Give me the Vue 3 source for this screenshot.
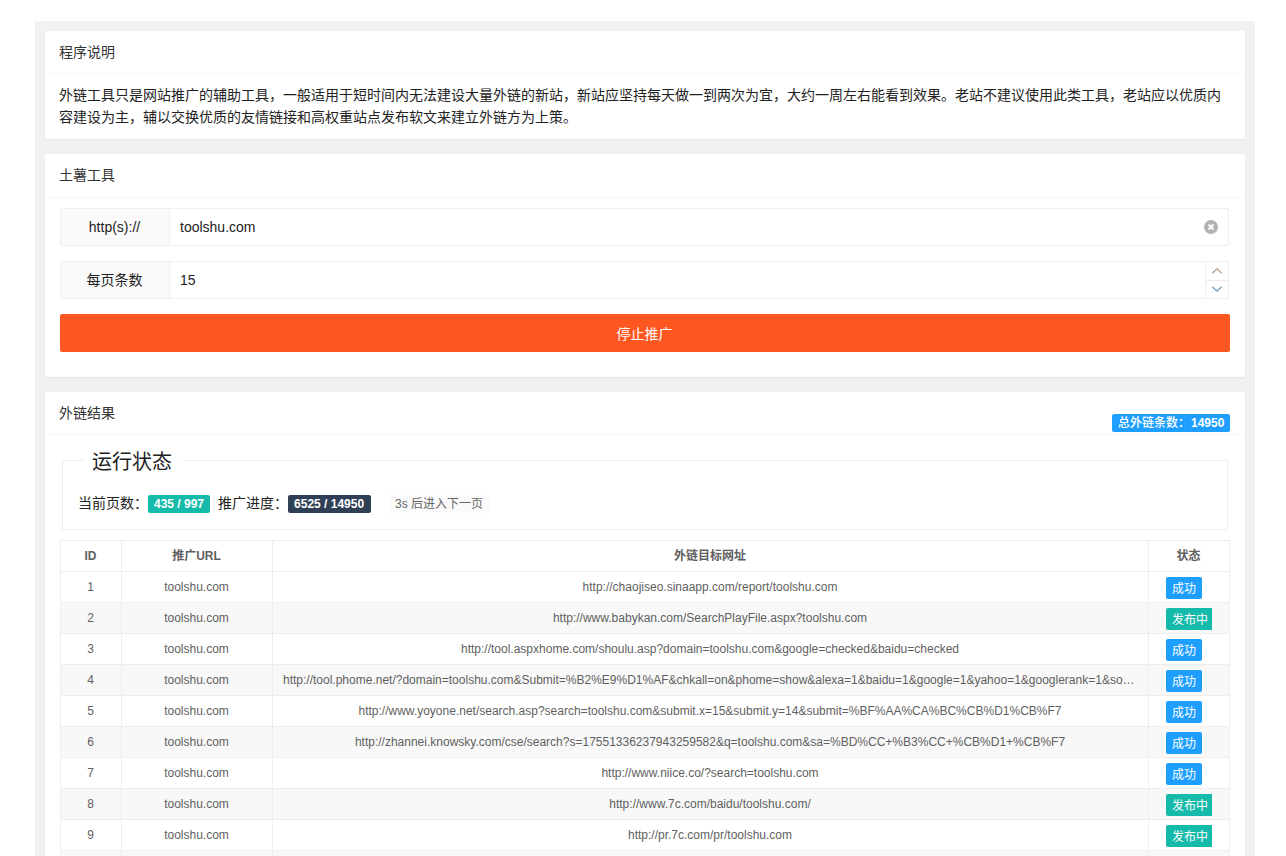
<script setup>
import { ref } from 'vue'

const domain = ref('toolshu.com')
const pageSize = ref(15)

const total = 14950
const links = [
  { url: 'http://chaojiseo.sinaapp.com/report/toolshu.com', done: true },
  { url: 'http://www.babykan.com/SearchPlayFile.aspx?toolshu.com', done: false },
  { url: 'http://tool.aspxhome.com/shoulu.asp?domain=toolshu.com&google=checked&baidu=checked', done: true },
  { url: 'http://tool.phome.net/?domain=toolshu.com&Submit=%B2%E9%D1%AF&chkall=on&phome=show&alexa=1&baidu=1&google=1&yahoo=1&googlerank=1&sogou=1', done: true },
  { url: 'http://www.yoyone.net/search.asp?search=toolshu.com&submit.x=15&submit.y=14&submit=%BF%AA%CA%BC%CB%D1%CB%F7', done: true },
  { url: 'http://zhannei.knowsky.com/cse/search?s=17551336237943259582&q=toolshu.com&sa=%BD%CC+%B3%CC+%CB%D1+%CB%F7', done: true },
  { url: 'http://www.niice.co/?search=toolshu.com', done: true },
  { url: 'http://www.7c.com/baidu/toolshu.com/', done: false },
  { url: 'http://pr.7c.com/pr/toolshu.com', done: false },
  { url: '', done: null },
]
</script>

<template>
  <div class="page">
    <section class="card">
      <div class="card-header">程序说明</div>
      <div class="card-body">
        外链工具只是网站推广的辅助工具，一般适用于短时间内无法建设大量外链的新站，新站应坚持每天做一到两次为宜，大约一周左右能看到效果。老站不建议使用此类工具，老站应以优质内容建设为主，辅以交换优质的友情链接和高权重站点发布软文来建立外链方为上策。
      </div>
    </section>

    <section class="card">
      <div class="card-header tall">土薯工具</div>
      <div class="card-body form">
        <div class="field">
          <label for="domain">http(s)://</label>
          <input id="domain" v-model="domain" type="text" />
          <button class="clear" aria-label="clear" @click="domain = ''">
            <svg width="14" height="14" viewBox="0 0 14 14">
              <circle cx="7" cy="7" r="7" fill="#b2b2b2" />
              <path d="M4.5 4.5l5 5M9.5 4.5l-5 5" stroke="#fff" stroke-width="1.8" />
            </svg>
          </button>
        </div>
        <div class="field">
          <label for="size">每页条数</label>
          <input id="size" v-model="pageSize" type="text" />
          <div class="stepper">
            <button aria-label="up" @click="pageSize++">
              <svg width="10" height="6" viewBox="0 0 10 6">
                <path d="M.4 5.2L5 .8l4.6 4.4" fill="none" stroke="#b39b84" stroke-width="1.2" />
              </svg>
            </button>
            <button aria-label="down" @click="pageSize--">
              <svg width="10" height="6" viewBox="0 0 10 6">
                <path d="M.4.8L5 5.2 9.6.8" fill="none" stroke="#6f9cc0" stroke-width="1.2" />
              </svg>
            </button>
          </div>
        </div>
        <button class="submit">停止推广</button>
      </div>
    </section>

    <section class="card">
      <div class="card-header">
        外链结果
        <span class="badge blue total">总外链条数：<b>{{ total }}</b></span>
      </div>
      <div class="card-body result">
        <fieldset>
          <legend>运行状态</legend>
          <div class="status">
            <span>当前页数：</span>
            <span class="badge green page-no">435 / 997</span>
            <span>推广进度：</span>
            <span class="badge dark">6525 / {{ total }}</span>
            <span class="badge gray">3s 后进入下一页</span>
          </div>
        </fieldset>

        <table>
          <colgroup>
            <col class="col-id" />
            <col class="col-url" />
            <col />
            <col class="col-state" />
          </colgroup>
          <thead>
            <tr>
              <th>ID</th>
              <th>推广URL</th>
              <th>外链目标网址</th>
              <th>状态</th>
            </tr>
          </thead>
          <tbody>
            <tr v-for="(link, i) in links" :key="i">
              <td>{{ link.url ? i + 1 : '' }}</td>
              <td>{{ link.url ? domain : '' }}</td>
              <td>{{ link.url }}</td>
              <td class="state">
                <span v-if="link.url" class="tag" :class="link.done ? 'blue' : 'green clipped'">{{ link.done ? '成功' : '发布中' }}</span>
              </td>
            </tr>
          </tbody>
        </table>
      </div>
    </section>
  </div>
</template>

<style>
body {
  height: 856px;
  overflow: hidden;
  background: #fff;
}
</style>

<style scoped>
* {
  box-sizing: border-box;
}

.page {
  width: 1220px;
  height: 835px;
  margin: 21px 0 0 35px;
  padding: 10px;
  background: #f1f1f1;
  overflow: hidden;
  color: #333;
  font-family: "Liberation Sans", "Noto Sans CJK SC", sans-serif;
  font-size: 14px;
  line-height: 22.4px;
}

.card {
  margin-bottom: 15px;
  border-radius: 2px;
  background: #fff;
  box-shadow: 0 1px 2px rgba(0, 0, 0, 0.05);
}

.card-header {
  display: flex;
  justify-content: space-between;
  height: 43px;
  padding: 0 15px 0 14px;
  border-bottom: 1px solid #f6f6f6;
  line-height: 42px;
}

.tall {
  height: 44px;
}

.card-body {
  padding: 10px 15px 10px 14px;
  color: #222;
}

.form {
  padding: 10.2px 15px 25px;
}

button {
  padding: 0;
  border: 0;
  background: none;
  font-family: inherit;
  cursor: pointer;
}

.field {
  display: flex;
  width: 1169px;
  height: 38px;
  margin-bottom: 15px;
  border: 1px solid #eee;
  border-radius: 2px;
}

.field label {
  width: 109px;
  padding-right: 1px;
  border-right: 1px solid #eee;
  background: #fafafa;
  line-height: 36px;
  text-align: center;
}

.field input {
  flex: 1;
  min-width: 0;
  padding: 0 10px;
  border: 0;
  outline: none;
  background: none;
  color: #222;
  font: inherit;
}

.clear {
  display: flex;
  align-items: center;
  padding-right: 10px;
}

.stepper {
  display: flex;
  flex-direction: column;
  width: 23px;
  border-left: 1px solid #eee;
}

.stepper button {
  display: flex;
  flex: 1;
  align-items: center;
  justify-content: center;
}

.stepper button + button {
  border-top: 1px solid #eee;
}

.submit {
  display: block;
  width: 100%;
  height: 38px;
  padding: 2px 1px 0 0;
  border-radius: 2px;
  background: #ff5722;
  color: #fff;
  font-size: 14px;
  line-height: 36px;
}

.badge {
  height: 18px;
  padding: 0 6px;
  border-radius: 2px;
  color: #fff;
  font-size: 12px;
  font-weight: 600;
  line-height: 18px;
  white-space: nowrap;
}

.total {
  width: 118px;
  margin-top: 22px;
  font-weight: 500;
}

.total b {
  margin-left: 1px;
  font-weight: 600;
}

.blue {
  background: #1e9fff;
}

.green {
  background: #16baaa;
}

.dark {
  width: 83px;
  background: #2f4056;
}

.gray {
  width: 100px;
  margin-left: 18px;
  background: #fafafa;
  color: #666;
  font-weight: 400;
}

.result {
  padding: 15px;
}

fieldset {
  height: 80px;
  margin: 0 2px 10px;
  padding: 0 15px;
  border: 1px solid #eee;
}

legend {
  height: 21px;
  margin-left: 5px;
  padding: 0 10px 0 9px;
  font-size: 20px;
  line-height: 25px;
}

.status {
  display: flex;
  align-items: center;
  padding-top: 23px;
}

.status > span:not(.badge) {
  margin-top: -2px;
}

.page-no {
  margin-right: 8px;
}

table {
  width: 1170px;
  border-collapse: collapse;
  table-layout: fixed;
  color: #5f5f5f;
  font-size: 12px;
  line-height: 20px;
}

.col-id {
  width: 61px;
}

.col-url {
  width: 151px;
}

.col-state {
  width: 81px;
}

th,
td {
  height: 31px;
  padding: 0 11px 0 10px;
  border: 1px solid #eee;
  overflow: hidden;
  text-align: center;
  text-overflow: ellipsis;
  white-space: nowrap;
}

th {
  font-weight: 600;
}

tbody tr:nth-child(even) {
  background: #f8f8f8;
}

.state {
  padding: 1px 0 0 17px;
  text-align: left;
}

.tag {
  display: block;
  width: 36px;
  height: 22px;
  padding-left: 6px;
  border-radius: 2px;
  color: #fff;
  line-height: 24px;
}

.clipped {
  width: 46px;
  border-radius: 2px 0 0 2px;
}
</style>
